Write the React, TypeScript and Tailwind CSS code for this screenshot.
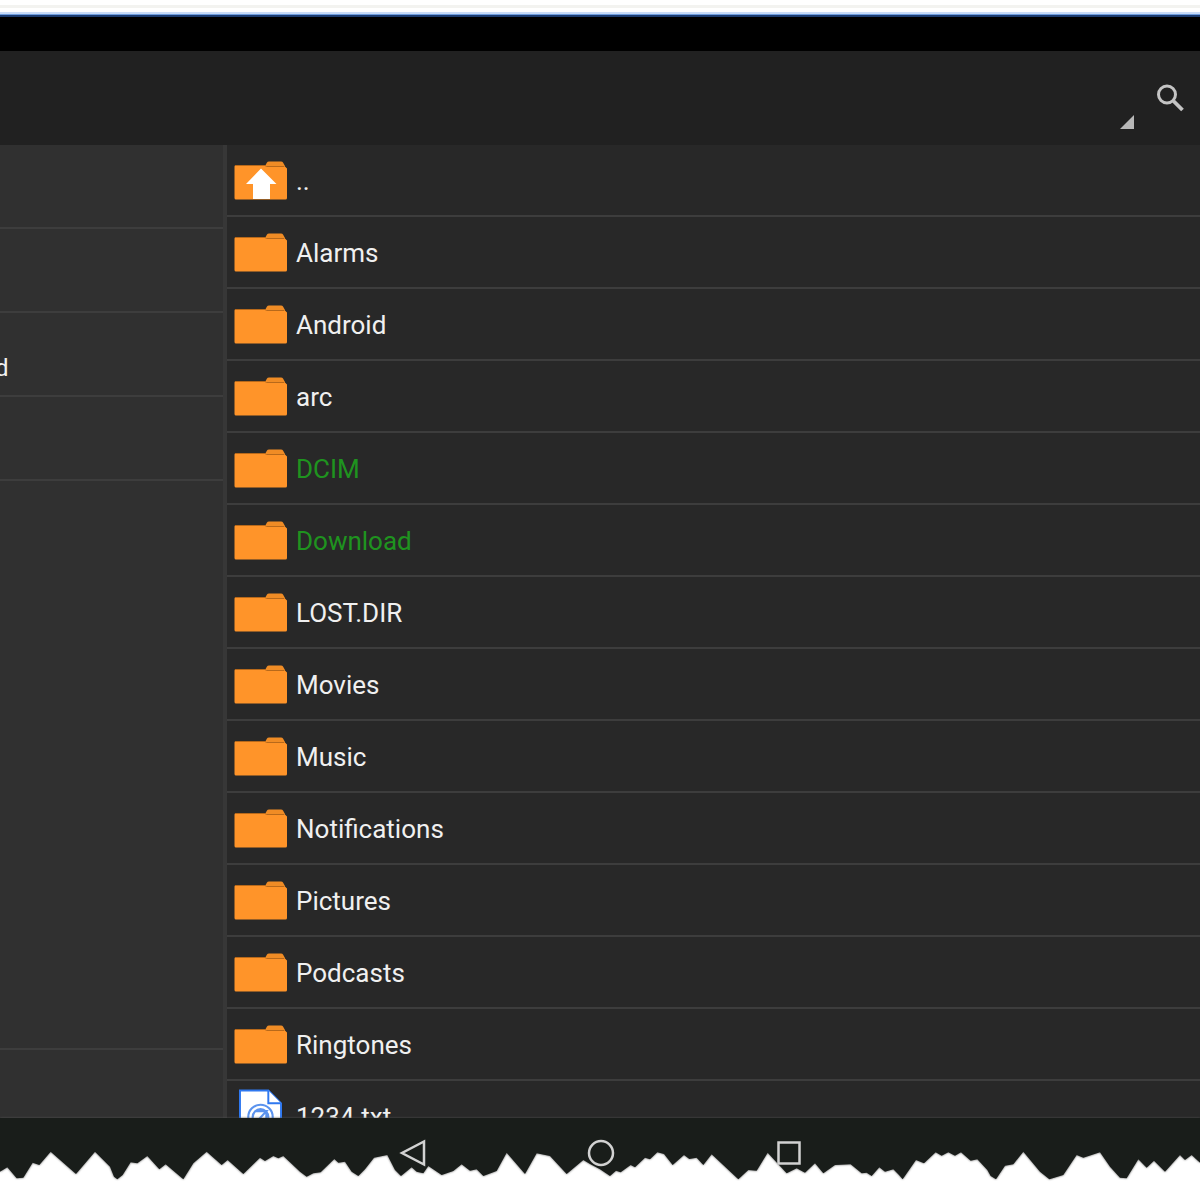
type Entry = {
  name: string;
  kind: "up" | "folder" | "file";
  mounted?: boolean;
};

const ENTRIES: Entry[] = [
  { name: "..", kind: "up" },
  { name: "Alarms", kind: "folder" },
  { name: "Android", kind: "folder" },
  { name: "arc", kind: "folder" },
  { name: "DCIM", kind: "folder", mounted: true },
  { name: "Download", kind: "folder", mounted: true },
  { name: "LOST.DIR", kind: "folder" },
  { name: "Movies", kind: "folder" },
  { name: "Music", kind: "folder" },
  { name: "Notifications", kind: "folder" },
  { name: "Pictures", kind: "folder" },
  { name: "Podcasts", kind: "folder" },
  { name: "Ringtones", kind: "folder" },
  { name: "1234.txt", kind: "file" },
];

const SIDE_ITEMS = ["", "", "d", ""];

function FolderIcon({ up }: { up?: boolean }) {
  return (
    <svg viewBox="0 0 53 39" className="h-[39px] w-[53px]" aria-hidden="true">
      <path d="M31 5 L33 1.5 Q33.5 0.5 35 0.5 H47 Q48.500 0.500 49 1.500 L51 5 Z" fill="#f08c25" />
      <path d="M0.500 5.500 Q0.500 4 2 4 H31 L32 5 H50.500 L53 7.500 V37 Q53 38.500 51.500 38.500 H2 Q0.500 38.500 0.500 37 Z" fill="#ff9429" />
      <path d="M1 4.500 H31 L32.500 5.500 H50" stroke="#b8691a" strokeWidth="1" fill="none" />
      {up && <path d="M27 7.500 L42.500 23 H36 V38 H19 V23 H12 Z" fill="#fff" />}
    </svg>
  );
}

function FileIcon() {
  return (
    <svg viewBox="0 0 44 54" className="h-[54px] w-[43px]" aria-hidden="true">
      <path d="M1 1 H30 L43 14 V53 H1 Z" fill="#fff" stroke="#2f78f0" strokeWidth="2" />
      <path d="M30 1 V14 H43" fill="#fff" stroke="#2f78f0" strokeWidth="2" />
      <g fill="none" stroke="#5b93ee" strokeWidth="2.2">
        <circle cx="22" cy="28" r="12.500" />
        <circle cx="22" cy="28" r="8" />
        <path d="M17 22 H28 L17 34 M28 22 V30" />
      </g>
    </svg>
  );
}

// lower outline of the torn strip, three units to the pixel
const TORN_EDGE =
  "0,185 22,172 50,205 70,203 98,158 118,165 152,125 228,192 285,125 330,170 342,200 352,208 368,195 392,157 412,160 442,138 478,178 497,163 550,208 580,160 620,125 665,165 683,150 730,192 780,143 795,153 820,138 835,145 850,138 900,185 " +
  "920,200 940,190 962,187 1003,147 1015,158 1035,155 1055,185 1075,198 1095,178 1122,143 1162,135 1185,180 1203,198 1235,172 1250,185 1270,190 1285,168 1325,195 1360,183 1385,163 1410,182 1430,178 1450,198 1490,183 1520,128 1575,192 1610,130 1650,138 1700,192 1750,150 1770,162 1800,178 " +
  "1830,198 1848,182 1862,187 1892,165 1905,172 1935,143 1950,148 1972,127 1992,132 2018,165 2052,135 2068,147 2090,143 2110,165 2135,133 2215,208 2245,180 2270,182 2303,128 2360,190 2390,175 2415,188 2445,160 2470,190 2505,165 2552,163 2585,190 2600,188 2615,198 2638,172 2655,185 2680,178 2697,195 " +
  "2708,208 2748,150 2772,160 2807,127 2825,137 2845,127 2865,137 2883,127 2912,152 2932,148 2962,180 2972,198 2988,208 3015,167 3040,163 3070,125 3120,185 3148,208 3190,195 3230,135 3250,143 3300,127 3330,170 3360,203 3380,205 3415,148 3440,173 3462,152 3495,185 3540,135 3555,150 3575,135 3600,158";

function TopEdge() {
  return (
    <div>
      <div className="h-[5px] bg-white" />
      <div className="h-[3px] bg-[#f3f3f0]" />
      <div className="h-1 bg-white" />
      <div className="h-0.5 bg-[#c9dcf8]" />
      <div className="h-px bg-[#6f9ee0]" />
      <div className="h-0.5 bg-[#1c3c70]" />
      <div className="h-[34px] bg-black" />
    </div>
  );
}

function Toolbar() {
  return (
    <header className="flex h-[94px] shrink-0 items-center justify-end gap-[22px] bg-[#212121] pr-4">
      <button type="button" aria-label="More" className="self-end pb-4">
        <svg viewBox="0 0 14 14" className="size-3.5" aria-hidden="true">
          <path d="M14 0 V14 H0 Z" fill="#b8b8b8" />
        </svg>
      </button>
      <button type="button" aria-label="Search">
        <svg viewBox="0 0 28 28" className="size-7" fill="none" stroke="#c4c4c4" aria-hidden="true">
          <circle cx="11" cy="10.500" r="8.500" strokeWidth="3" />
          <path d="M17.500 17 L26.500 26" strokeWidth="3.800" />
        </svg>
      </button>
    </header>
  );
}

function Sidebar() {
  return (
    <aside className="flex w-[227px] shrink-0 flex-col justify-between border-r-4 border-[#373737] bg-[#303030]">
      <ul>
        {SIDE_ITEMS.map((label, i) => (
          <li
            key={i}
            className="flex h-[84px] items-end border-b-2 border-[#3d3d3d] pb-[11px] text-[24px] leading-8 text-[#f0f0f0]"
          >
            <span className="-ml-[5px]">{label}</span>
          </li>
        ))}
      </ul>
      <div className="h-[70px] border-t-2 border-[#3d3d3d]" />
    </aside>
  );
}

function FileRow({ entry }: { entry: Entry }) {
  return (
    <li className="border-b-2 border-[#3d3d3d]">
      <button type="button" className="flex h-[70px] w-full items-center gap-[9px] pl-[7px] text-left">
        <span className="flex w-[53px] shrink-0 justify-center">
          {entry.kind === "file" ? <FileIcon /> : <FolderIcon up={entry.kind === "up"} />}
        </span>
        <span className={entry.mounted ? "pt-0.5 text-[#1f931f]" : "pt-0.5 text-[#f0f0f0]"}>
          {entry.name}
        </span>
      </button>
    </li>
  );
}

function NavBar() {
  return (
    <footer className="relative h-[82px] shrink-0 bg-white">
      <svg
        viewBox="0 24 3600 246"
        preserveAspectRatio="none"
        className="absolute inset-0 h-full w-full drop-shadow-[0_0_1px_#555]"
        aria-hidden="true"
      >
        <polygon points={`0,24 ${TORN_EDGE} 3600,24`} fill="#191d1a" />
      </svg>
      <nav className="relative flex justify-center gap-[160px] pt-[21px] pl-0.5">
        <button type="button" aria-label="Back">
          <svg viewBox="0 0 28 28" className="size-7" fill="none" stroke="#d2d2d2" strokeWidth="2.500">
            <path d="M25 2.500 V25.500 L3 14 Z" />
          </svg>
        </button>
        <button type="button" aria-label="Home">
          <svg viewBox="0 0 28 28" className="size-7" fill="none" stroke="#d2d2d2" strokeWidth="2.500">
            <circle cx="14" cy="14" r="12" />
          </svg>
        </button>
        <button type="button" aria-label="Recent apps">
          <svg viewBox="0 0 28 28" className="size-7" fill="none" stroke="#d2d2d2" strokeWidth="2.500">
            <rect x="3.500" y="3.500" width="21" height="21" />
          </svg>
        </button>
      </nav>
    </footer>
  );
}

export default function App() {
  return (
    <div className="flex h-screen flex-col overflow-hidden bg-white font-['Roboto',sans-serif]">
      <TopEdge />
      <Toolbar />
      <main className="flex min-h-0 flex-1 overflow-hidden">
        <Sidebar />
        <ul className="min-w-0 flex-1 overflow-hidden bg-[#282828] text-[26px] leading-8">
          {ENTRIES.map((entry) => (
            <FileRow key={entry.name} entry={entry} />
          ))}
        </ul>
      </main>
      <NavBar />
    </div>
  );
}
